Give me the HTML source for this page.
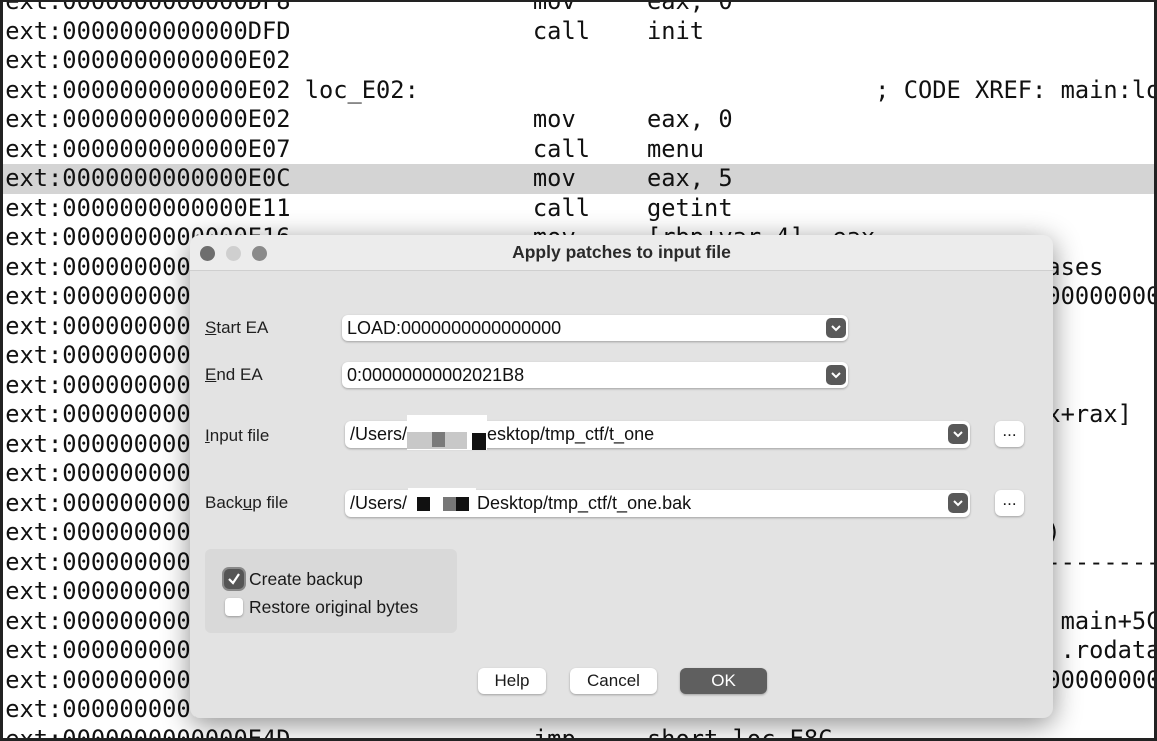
<!DOCTYPE html>
<html><head><meta charset="utf-8"><style>
*{margin:0;padding:0;box-sizing:border-box}
html,body{width:1157px;height:741px;overflow:hidden}
body{background:#fff;position:relative;font-family:"Liberation Sans",sans-serif}
.frame{position:absolute;inset:0;border:3px solid #222;border-top-width:2px;z-index:50;pointer-events:none}
.clip{position:absolute;left:0;top:0;width:1157px;height:741px;overflow:hidden}
.code{position:absolute;left:-9px;top:-13px;font-family:"DejaVu Sans Mono","Liberation Mono",monospace;font-size:23.7px;line-height:29.5px;color:#111;white-space:pre}
.hl{position:absolute;left:0;top:164px;width:1157px;height:30px;background:#d4d4d4}
.dlg{position:absolute;left:190px;top:235px;width:863px;height:483px;background:#e3e3e3;border-radius:10px;box-shadow:0 6px 28px rgba(0,0,0,.45);overflow:hidden;z-index:10}
.tb{height:36px;background:#ececec;border-bottom:1px solid #cfcfcf;position:relative}
.tb .t{position:absolute;left:0;right:0;top:7px;text-align:center;font-weight:bold;font-size:17.5px;color:#2a2a2a}
.dot{position:absolute;top:11px;width:15px;height:15px;border-radius:50%}
.lbl{position:absolute;left:15px;font-size:17px;color:#1f1f1f}
.cb{position:absolute;background:#fff;border-radius:6px;box-shadow:0 1px 2px rgba(0,0,0,.3);font-size:18px;color:#111;padding-left:5px;line-height:26px}
.dd{position:absolute;right:2px;top:3px;width:20px;height:20px;background:#595959;border-radius:5px}
.dd svg{position:absolute;left:5px;top:6px}
.btn{position:absolute;background:#fff;border-radius:6px;box-shadow:0 1px 2px rgba(0,0,0,.3);font-size:17px;text-align:center;line-height:26px;color:#1a1a1a}
.abs{position:absolute}
</style></head><body>
<div class="clip">
<div class="hl"></div>
<div class="code">text:0000000000000DF8                 mov     eax, 0
text:0000000000000DFD                 call    init
text:0000000000000E02
text:0000000000000E02 loc_E02:                                ; CODE XREF: main:lo
text:0000000000000E02                 mov     eax, 0
text:0000000000000E07                 call    menu
text:0000000000000E0C                 mov     eax, 5
text:0000000000000E11                 call    getint
text:0000000000000E16                 mov     [rbp+var_4], eax
text:0000000000000E19                                                    cases
text:0000000000000E1D                                                     000000000
text:0000000000000E20
text:0000000000000E22
text:0000000000000E25
text:0000000000000E28                                                     x+rax]
text:0000000000000E2C
text:0000000000000E30
text:0000000000000E33
text:0000000000000E35                                                     )
text:0000000000000E37                                                     ----------
text:0000000000000E3A
text:0000000000000E3A                                                      main+5C
text:0000000000000E3D                                                      .rodata
text:0000000000000E40                                                     00000000
text:0000000000000E48                 call    add
text:0000000000000E4D                 jmp     short loc_E8C</div>
</div>
<div class="dlg">
 <div class="tb">
  <div class="dot" style="left:10px;background:#6e6e6e"></div>
  <div class="dot" style="left:36px;background:#cfcfcf"></div>
  <div class="dot" style="left:62px;background:#8a8a8a"></div>
  <div class="t">Apply patches to input file</div>
 </div>
 <div class="lbl" style="top:83px"><u>S</u>tart EA</div>
 <div class="lbl" style="top:130px"><u>E</u>nd EA</div>
 <div class="lbl" style="top:191px"><u>I</u>nput file</div>
 <div class="lbl" style="top:258px">Back<u>u</u>p file</div>
 <div class="cb" style="left:152px;top:80px;width:506px;height:26px">LOAD:0000000000000000<div class="dd"><svg width="10" height="8"><path d="M1 2 L5 6 L9 2" stroke="#fff" stroke-width="2" fill="none"/></svg></div></div>
 <div class="cb" style="left:152px;top:127px;width:506px;height:26px">0:00000000002021B8<div class="dd"><svg width="10" height="8"><path d="M1 2 L5 6 L9 2" stroke="#fff" stroke-width="2" fill="none"/></svg></div></div>
 <div class="cb" style="left:155px;top:186px;width:625px;height:27px"><span style="display:inline-block;width:62px">/Users/</span><span style="display:inline-block;width:75px"></span>esktop/tmp_ctf/t_one<div class="dd"><svg width="10" height="8"><path d="M1 2 L5 6 L9 2" stroke="#fff" stroke-width="2" fill="none"/></svg></div></div>
 <div class="cb" style="left:155px;top:255px;width:625px;height:27px"><span style="display:inline-block;width:63px">/Users/</span><span style="display:inline-block;width:64px"></span>Desktop/tmp_ctf/t_one.bak<div class="dd"><svg width="10" height="8"><path d="M1 2 L5 6 L9 2" stroke="#fff" stroke-width="2" fill="none"/></svg></div></div>
 <div class="abs" style="left:217px;top:180px;width:80px;height:35px;background:#fff"></div>
 <div class="abs" style="left:217px;top:197px;width:60px;height:17px;background:#c8c8c8"></div>
 <div class="abs" style="left:242px;top:197px;width:13px;height:15px;background:#7a7a7a"></div>
 <div class="abs" style="left:282px;top:198px;width:14px;height:17px;background:#111"></div>
 <div class="abs" style="left:218px;top:253px;width:68px;height:28px;background:#fff"></div>
 <div class="abs" style="left:227px;top:262px;width:13px;height:14px;background:#111"></div>
 <div class="abs" style="left:253px;top:262px;width:13px;height:14px;background:#777"></div>
 <div class="abs" style="left:266px;top:262px;width:13px;height:14px;background:#111"></div>
 <div class="btn" style="left:805px;top:186px;width:29px;height:26px;line-height:20px">...</div>
 <div class="btn" style="left:805px;top:255px;width:29px;height:26px;line-height:20px">...</div>
 <div class="abs" style="left:15px;top:314px;width:252px;height:84px;background:#d9d9d9;border-radius:6px"></div>
 <div class="abs" style="left:34px;top:334px;width:20px;height:20px;background:#555;border-radius:5px;box-shadow:0 0 0 2px #888"><svg width="20" height="20"><path d="M5 10 L9 14 L15 5" stroke="#fff" stroke-width="2.2" fill="none"/></svg></div>
 <div class="abs" style="left:35px;top:363px;width:18px;height:18px;background:#fff;border-radius:4px;box-shadow:0 1px 2px rgba(0,0,0,.3)"></div>
 <div class="abs" style="left:59px;top:334px;font-size:17.5px;color:#1a1a1a">Create backup</div>
 <div class="abs" style="left:59px;top:362px;font-size:17.5px;color:#1a1a1a">Restore original bytes</div>
 <div class="btn" style="left:288px;top:433px;width:68px;height:26px">Help</div>
 <div class="btn" style="left:380px;top:433px;width:87px;height:26px">Cancel</div>
 <div class="btn" style="left:490px;top:433px;width:87px;height:26px;background:#5f5f5f;color:#fff">OK</div>
</div>
<div class="frame"></div>
</body></html>
